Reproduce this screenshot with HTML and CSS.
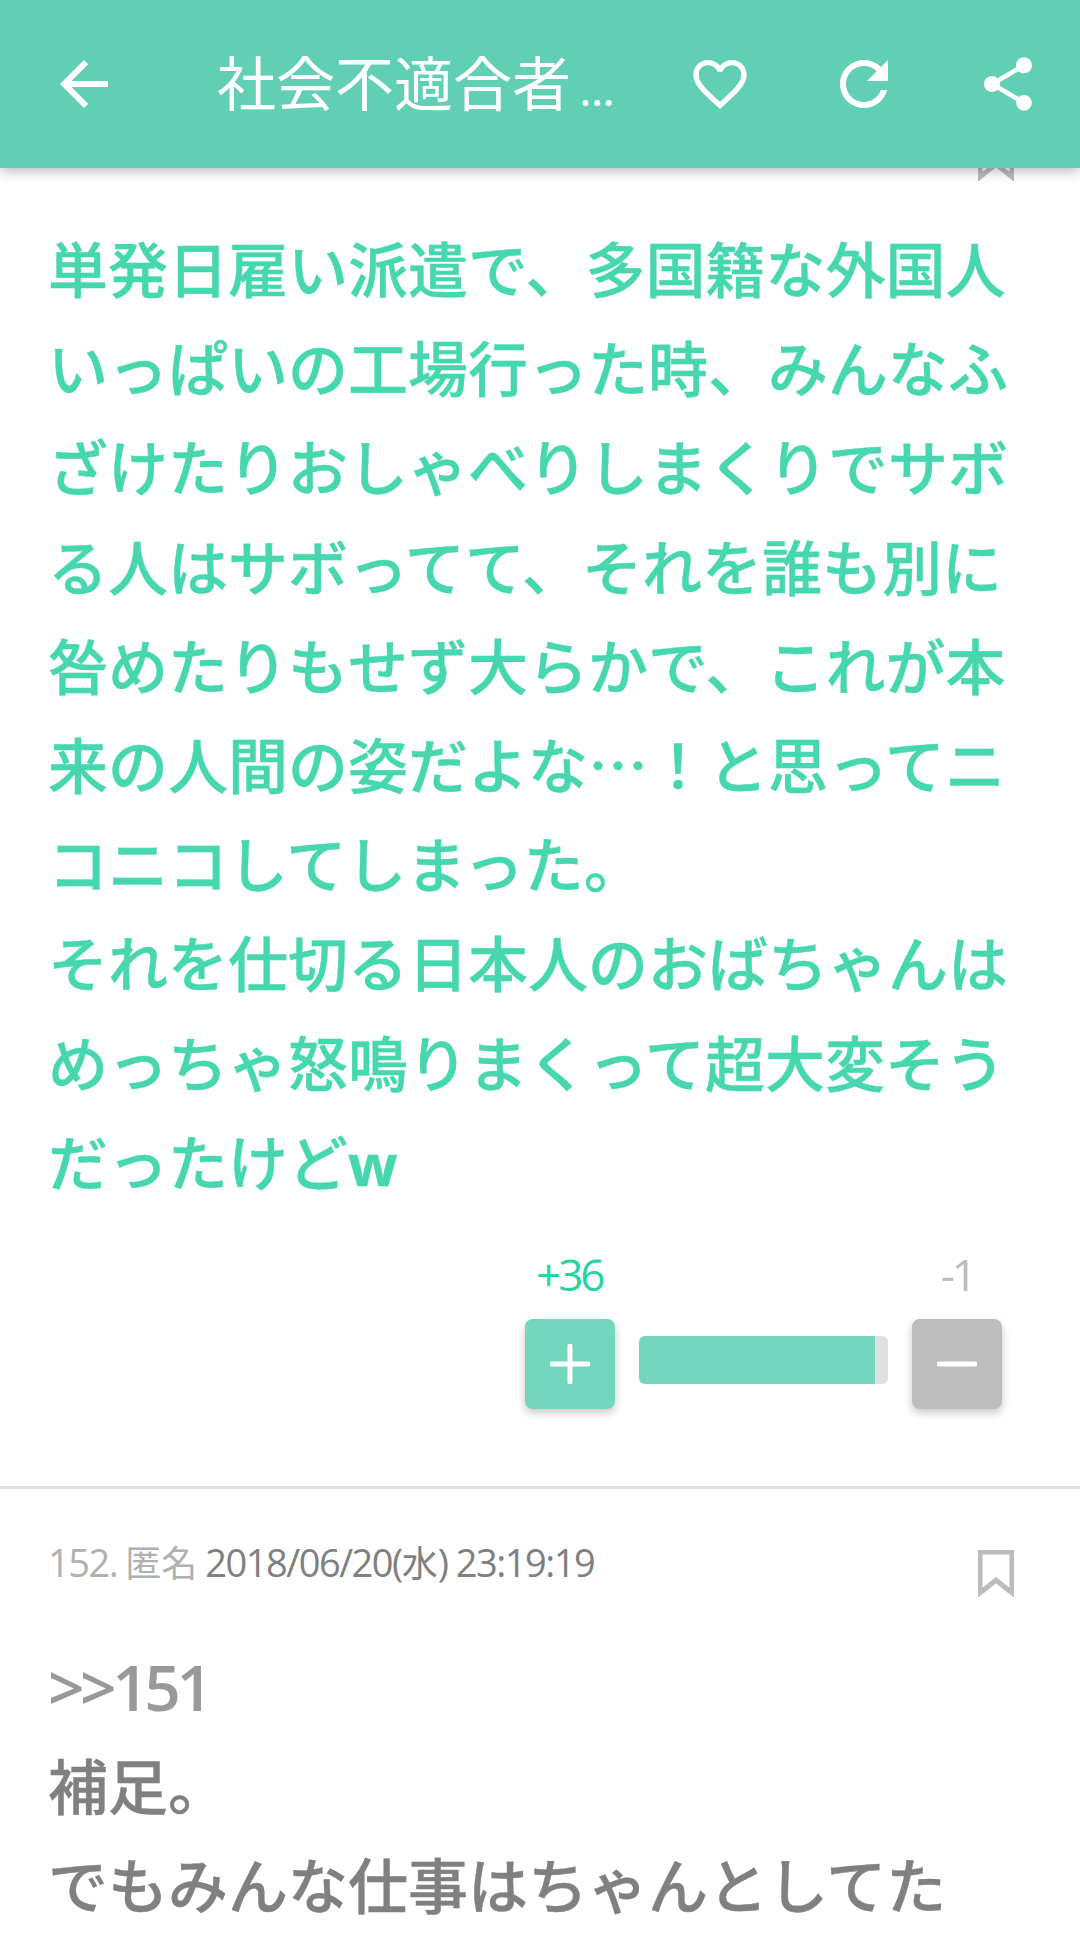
FILE: index.html
```html
<!DOCTYPE html>
<html lang="ja">
<head>
<meta charset="utf-8">
<title>社会不適合者</title>
<link rel="stylesheet" href="styles.css">
</head>
<body>
<div class="app">
  <header class="bar">
    <button class="ib"><svg viewBox="0 0 24 24"><path d="M20 11H7.83l5.59-5.59L12 4l-8 8 8 8 1.41-1.41L7.83 13H20v-2z"/></svg></button>
    <h1 class="title">社会不適合者<span class="dots">...</span></h1>
    <button class="ib"><svg class="sm" viewBox="0 0 24 24"><path d="M16.5 3c-1.74 0-3.41.81-4.5 2.09C10.91 3.81 9.24 3 7.5 3 4.42 3 2 5.42 2 8.5c0 3.78 3.4 6.86 8.55 11.54L12 21.35l1.45-1.32C18.6 15.36 22 12.28 22 8.5 22 5.42 19.58 3 16.5 3zm-4.4 15.55l-.1.1-.1-.1C7.14 14.24 4 11.39 4 8.5 4 6.5 5.5 5 7.5 5c1.54 0 3.04.99 3.57 2.36h1.87C13.46 5.99 14.96 5 16.5 5c2 0 3.5 1.5 3.5 3.5 0 2.89-3.14 5.74-7.9 10.05z"/></svg></button>
    <button class="ib"><svg viewBox="0 0 24 24"><path d="M17.65 6.35C16.2 4.9 14.21 4 12 4c-4.42 0-7.99 3.58-7.99 8s3.57 8 7.99 8c3.73 0 6.84-2.55 7.73-6h-2.08c-.82 2.33-3.04 4-5.65 4-3.31 0-6-2.69-6-6s2.69-6 6-6c1.66 0 3.14.69 4.22 1.78L13 11h7V4l-2.35 2.35z"/></svg></button>
    <button class="ib"><svg class="sm" viewBox="0 0 24 24"><path d="M18 16.08c-.76 0-1.44.3-1.96.77L8.91 12.7c.05-.23.09-.46.09-.7s-.04-.47-.09-.7l7.05-4.11c.54.5 1.25.81 2.04.81 1.66 0 3-1.34 3-3s-1.34-3-3-3-3 1.34-3 3c0 .24.04.47.09.7L8.04 9.81C7.5 9.31 6.79 9 6 9c-1.66 0-3 1.34-3 3s1.34 3 3 3c.79 0 1.5-.31 2.04-.81l7.12 4.16c-.05.21-.08.43-.08.65 0 1.61 1.31 2.92 2.92 2.92 1.61 0 2.92-1.31 2.92-2.92s-1.31-2.92-2.92-2.92z"/></svg></button>
  </header>
  <main class="list">
    <article class="post first">
      <svg class="mark mark-top" viewBox="0 0 36 47"><path class="mark-line" d="M2 2h32v41L18 30 2 43z"/></svg>
      <p class="body hot">単発日雇い派遣で、多国籍な外国人いっぱいの工場行った時、みんなふざけたりおしゃべりしまくりでサボる人はサボってて、それを誰も別に咎めたりもせず大らかで、これが本来の人間の姿だよな…！と思ってニコニコしてしまった。<br>それを仕切る日本人のおばちゃんはめっちゃ怒鳴りまくって超大変そうだったけど<b class="w">w</b></p>
      <div class="votes">
        <div class="counts"><span class="up">+36</span><span class="down">-1</span></div>
        <div class="controls">
          <div class="vb vb-up"><svg viewBox="0 0 40 40"><path d="M20 2v36M2 20h36"/></svg></div>
          <div class="track"><div class="fill" style="width:94.8%"></div></div>
          <div class="vb vb-down"><svg viewBox="0 0 40 40"><path d="M2 20h36"/></svg></div>
        </div>
      </div>
    </article>
    <article class="post">
      <div class="meta">
        <div class="info"><span class="light"><span class="num">152.</span> 匿名</span> <span class="num">2018/06/20(</span>水<span class="num">) 23:19:19</span></div>
        <svg class="mark" viewBox="0 0 36 47"><path class="mark-line" d="M2 2h32v41L18 30 2 43z"/></svg>
      </div>
      <p class="body plain"><span class="ref">&gt;&gt;151</span><br>補足。<br>でもみんな仕事はちゃんとしてた</p>
    </article>
  </main>
</div>
</body>
</html>
```
FILE: styles.css
```css
* { box-sizing: border-box; }
html, body { margin: 0; padding: 0; }
body {
  background: #fff;
  font-family: "Noto Sans CJK JP", "Noto Sans", sans-serif;
}
.app { width: 1080px; height: 1944px; overflow: hidden; display: flex; flex-direction: column; }
.bar {
  flex: none;
  height: 168px;
  background: #60cfb4;
  display: flex;
  align-items: center;
  padding-left: 12px;
  position: relative;
  z-index: 2;
  box-shadow: 0 3px 12px rgba(0, 0, 0, .28);
}
.ib {
  flex: none;
  width: 144px;
  height: 144px;
  border: 0;
  padding: 0;
  background: none;
  display: flex;
  align-items: center;
  justify-content: center;
}
.ib svg { width: 72px; height: 72px; fill: #fff; }
.ib svg.sm { width: 64px; height: 64px; }
.title {
  flex: 1;
  margin: 0;
  padding-left: 61px;
  min-width: 0;
  color: #fff;
  font-size: 59px;
  font-weight: 400;
  line-height: 80px;
  white-space: nowrap;
}
.dots { font-family: "Open Sans", sans-serif; font-size: 48px; letter-spacing: -1px; margin-left: 8px; }
.list { flex: 1; min-height: 0; overflow: hidden; }
.post { padding: 0 48px; }
.first {
  height: 1321px;
  border-bottom: 3px solid #e0e0e0;
  display: flex;
  flex-direction: column;
}
.mark { flex: none; width: 36px; height: 47px; }
.mark-line { fill: none; stroke: #bdbdbd; stroke-width: 5; }
.mark-top { align-self: flex-end; margin: -34px 18px 0 0; }
.body {
  margin: 0;
  font-size: 60px;
  line-height: 99.2px;
  font-weight: 500;
  -webkit-text-stroke: .4px currentColor;
}
.hot { color: #46d7ae; margin-top: 36px; }
.w { font-family: "Open Sans", sans-serif; font-size: 58px; line-height: 1; font-weight: 700; }
.votes { margin-top: 37px; width: 477px; align-self: flex-end; margin-right: 30px; }
.counts {
  display: flex;
  justify-content: space-between;
  font-family: "Open Sans", sans-serif;
  font-size: 44px;
  letter-spacing: -3px;
  line-height: 56px;
  padding: 0 28px 0 11px;
}
.up { color: #26d3a3; }
.down { color: #bdbdbd; }
.controls { display: flex; align-items: flex-start; gap: 24px; margin-top: 17px; }
.vb {
  flex: none;
  width: 90px;
  height: 90px;
  border-radius: 8px;
  display: flex;
  align-items: center;
  justify-content: center;
  box-shadow: 0 4px 8px rgba(0, 0, 0, .22);
}
.vb svg { width: 40px; height: 40px; fill: none; stroke: #fff; stroke-width: 5; stroke-linecap: round; }
.vb-up { background: #74d6bd; }
.vb-down { background: #bdbdbd; }
.track { flex: 1; height: 48px; margin-top: 17px; border-radius: 6px; background: #e0e0e0; overflow: hidden; }
.fill { height: 100%; background: #74d6bd; }
.meta {
  display: flex;
  justify-content: space-between;
  align-items: flex-start;
  padding-top: 46px;
}
.info { font-size: 36px; line-height: 52px; color: #808080; white-space: nowrap; }
.num { font-family: "Open Sans", sans-serif; font-size: 38px; letter-spacing: -1.5px; }
.light { color: #b0b0b0; }
.meta .mark { margin: 15px 18px 0 0; }
.plain { color: #808080; margin-top: 38px; }
.ref { color: #999; font-family: "Open Sans", sans-serif; font-size: 64px; line-height: 1; letter-spacing: -4.5px; font-weight: 600; -webkit-text-stroke: 0; }
```
